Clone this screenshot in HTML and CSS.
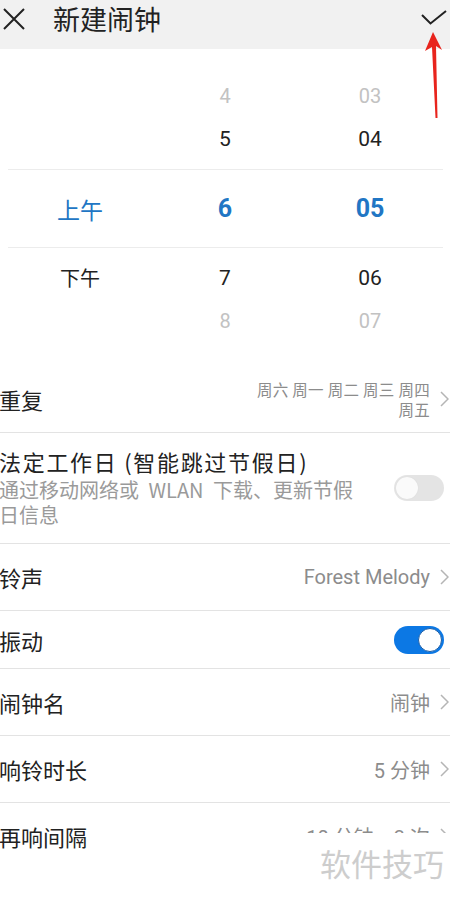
FILE: index.html
```html
<!DOCTYPE html>
<html lang="zh-CN">
<head>
    <meta charset="UTF-8">
    <meta name="viewport" content="width=device-width, initial-scale=1.0">
    <title>新建闹钟</title>
    <link rel="stylesheet" href="styles.css">
</head>
<body>
    <div class="screen">
        <header class="topbar">
            <svg class="icon-close" width="24" height="22" viewBox="0 0 24 22">
                <path d="M2 1 L22 21 M22 1 L2 21" stroke="#222" stroke-width="2" fill="none"/>
            </svg>
            <h1 class="title">新建闹钟</h1>
            <svg class="icon-check" width="28" height="18" viewBox="0 0 28 18">
                <path d="M2 5 L10.5 13.5 L26 1" stroke="#222" stroke-width="2" fill="none"/>
            </svg>
        </header>

        <div class="picker">
            <div class="prow faded"><span></span><span>4</span><span>03</span></div>
            <div class="prow"><span></span><span>5</span><span>04</span></div>
            <div class="pline"></div>
            <div class="prow selected"><span class="ampm">上午</span><span>6</span><span>05</span></div>
            <div class="pline"></div>
            <div class="prow after"><span class="ampm">下午</span><span>7</span><span>06</span></div>
            <div class="prow faded"><span></span><span>8</span><span>07</span></div>
        </div>

        <div class="list">
            <div class="row">
                <div class="label">重复</div>
                <div class="right">
                    <div class="value multi">周六 周一 周二 周三 周四<br>周五</div>
                    <svg class="chev" width="9" height="16" viewBox="0 0 9 16"><path d="M1 1 L8 8 L1 15" stroke="#b5b5b5" stroke-width="1.5" fill="none"/></svg>
                </div>
            </div>
            <div class="row tall">
                <div class="texts">
                    <div class="label">法定工作日 (智能跳过节假日)</div>
                    <div class="sub">通过移动网络或 WLAN 下载、更新节假日信息</div>
                </div>
                <div class="switch"><span class="knob"></span></div>
            </div>
            <div class="row">
                <div class="label">铃声</div>
                <div class="right">
                    <div class="value">Forest Melody</div>
                    <svg class="chev" width="9" height="16" viewBox="0 0 9 16"><path d="M1 1 L8 8 L1 15" stroke="#b5b5b5" stroke-width="1.5" fill="none"/></svg>
                </div>
            </div>
            <div class="row short">
                <div class="label">振动</div>
                <div class="switch on"><span class="knob"></span></div>
            </div>
            <div class="row">
                <div class="label">闹钟名</div>
                <div class="right">
                    <div class="value">闹钟</div>
                    <svg class="chev" width="9" height="16" viewBox="0 0 9 16"><path d="M1 1 L8 8 L1 15" stroke="#b5b5b5" stroke-width="1.5" fill="none"/></svg>
                </div>
            </div>
            <div class="row">
                <div class="label">响铃时长</div>
                <div class="right">
                    <div class="value">5 分钟</div>
                    <svg class="chev" width="9" height="16" viewBox="0 0 9 16"><path d="M1 1 L8 8 L1 15" stroke="#b5b5b5" stroke-width="1.5" fill="none"/></svg>
                </div>
            </div>
            <div class="row last">
                <div class="label">再响间隔</div>
                <div class="right">
                    <div class="value">10 分钟，3 次</div>
                    <svg class="chev" width="9" height="16" viewBox="0 0 9 16"><path d="M1 1 L8 8 L1 15" stroke="#b5b5b5" stroke-width="1.5" fill="none"/></svg>
                </div>
            </div>
        </div>

        <!-- annotation arrow pointing at the check -->
        <svg class="arrow" width="24" height="90" viewBox="0 0 24 90">
            <path d="M10 0 L19 18 L13 14 L14.5 86 L12.5 86 L9 15 L2 19 Z" fill="#e8241d"/>
        </svg>

        <div class="watermark">软件技巧</div>
    </div>
</body>
</html>
```

FILE: styles.css
```css
body {
    margin: 0;
    background: #fff;
    font-family: Roboto, "Noto Sans CJK SC", sans-serif;
    color: #222;
}

.screen {
    position: relative;
    width: 450px;
    height: 900px;
    overflow: hidden;
    background: #fff;
}

.topbar {
    height: 49px;
    background: #f1f1f1;
    display: flex;
    align-items: center;
}

.icon-close {
    margin-left: 2px;
    margin-top: -12px;
}

.title {
    margin: 0 0 0 27px;
    font-size: 27px;
    font-weight: 400;
    line-height: 1;
    margin-top: -12px;
    font-family: "Noto Sans CJK SC", sans-serif;
    flex: 1;
}

.icon-check {
    margin-right: 2px;
    margin-top: -12px;
}

.picker {
    padding-top: 25px;
    padding-bottom: 24px;
}

.prow {
    height: 43px;
    display: grid;
    grid-template-columns: 160px 130px 160px;
    align-items: center;
    justify-items: center;
    font-size: 21px;
    color: #222;
}

.prow.faded {
    color: #c2c2c2;
    font-size: 20px;
}

.prow.selected {
    height: 77px;
    color: #2176c4;
    font-size: 25px;
    font-weight: 700;
}

.prow.after {
    margin-top: 8px;
}

.ampm {
    font-family: "Noto Sans CJK SC", sans-serif;
    font-size: 20px;
}

.selected .ampm {
    font-size: 23px;
    font-weight: 400;
}

.pline {
    height: 1px;
    margin: 9px 7px 0 8px;
    background: #ececec;
}

.prow.selected + .pline {
    margin-top: 0;
}

.list {
    font-family: "Noto Sans CJK SC", sans-serif;
}

.row {
    height: 66px;
    border-bottom: 1px solid #e3e3e3;
    display: flex;
    align-items: center;
    justify-content: space-between;
}

.row.tall {
    height: 110px;
}

.row.short {
    height: 57px;
}

.row.last {
    border-bottom: none;
}

.label {
    font-size: 22px;
    color: #222;
    margin-left: -1px;
}

.texts {
    width: 360px;
    margin-top: -4px;
}

.tall .label {
    letter-spacing: 1.7px;
    line-height: 30px;
}

.sub {
    font-size: 20px;
    line-height: 25px;
    word-spacing: 5px;
    color: #9a9a9a;
    margin-top: 1px;
    margin-left: -1px;
}

.right {
    display: flex;
    align-items: center;
}

.value {
    font-size: 20px;
    color: #8c8c8c;
    font-family: Roboto, "Noto Sans CJK SC", sans-serif;
}

.value.multi {
    font-size: 15.5px;
    line-height: 20px;
    letter-spacing: 0.3px;
    text-align: right;
    font-family: "Noto Sans CJK SC", sans-serif;
}

.chev {
    margin-left: 10px;
    margin-right: 1px;
}

.switch {
    width: 50px;
    height: 26px;
    border-radius: 13px;
    background: #e4e4e4;
    margin-right: 6px;
    display: flex;
    align-items: center;
    padding: 0 2px;
    box-sizing: border-box;
}

.knob {
    width: 22px;
    height: 22px;
    border-radius: 50%;
    background: #fafafa;
    box-shadow: 0 0 1px #cfcfcf;
}

.switch.on {
    height: 28px;
    border-radius: 14px;
    background: #0c78e4;
    justify-content: flex-end;
}

.switch.on .knob {
    width: 24px;
    height: 24px;
    background: #fff;
    box-shadow: none;
    border: 1px solid #1b5ea8;
    box-sizing: border-box;
}

.arrow {
    position: absolute;
    left: 423px;
    top: 32px;
}

.watermark {
    position: absolute;
    left: 305px;
    top: 833px;
    width: 145px;
    height: 67px;
    background: #fff;
    color: #cdcdcd;
    font-family: "Noto Sans CJK SC", sans-serif;
    font-size: 31px;
    line-height: 1;
    padding: 14px 0 0 15px;
    box-sizing: border-box;
}
```
